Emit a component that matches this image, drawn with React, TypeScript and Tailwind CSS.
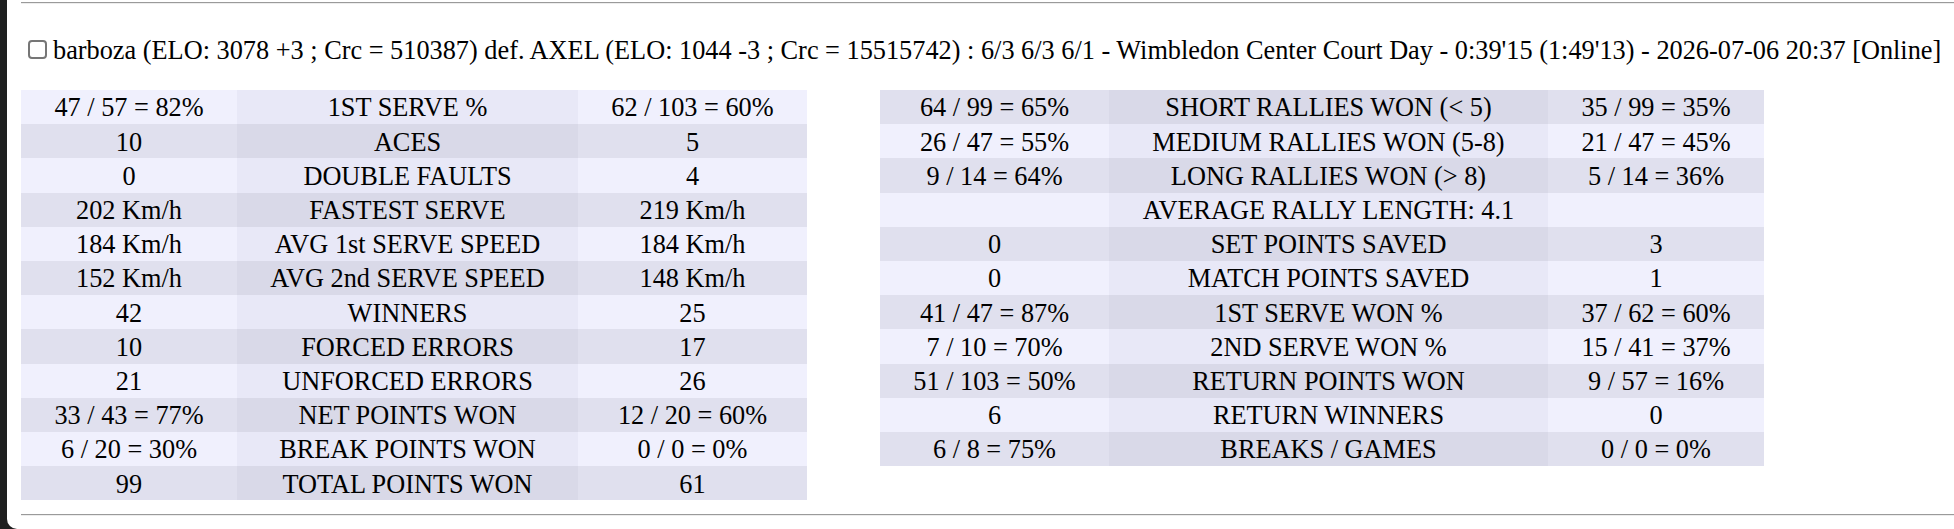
import React from 'react';

type Row = [string, string, string];

const leftRows: Row[] = [
  ['47 / 57 = 82%', '1ST SERVE %', '62 / 103 = 60%'],
  ['10', 'ACES', '5'],
  ['0', 'DOUBLE FAULTS', '4'],
  ['202 Km/h', 'FASTEST SERVE', '219 Km/h'],
  ['184 Km/h', 'AVG 1st SERVE SPEED', '184 Km/h'],
  ['152 Km/h', 'AVG 2nd SERVE SPEED', '148 Km/h'],
  ['42', 'WINNERS', '25'],
  ['10', 'FORCED ERRORS', '17'],
  ['21', 'UNFORCED ERRORS', '26'],
  ['33 / 43 = 77%', 'NET POINTS WON', '12 / 20 = 60%'],
  ['6 / 20 = 30%', 'BREAK POINTS WON', '0 / 0 = 0%'],
  ['99', 'TOTAL POINTS WON', '61'],
];

const rightRows: Row[] = [
  ['64 / 99 = 65%', 'SHORT RALLIES WON (< 5)', '35 / 99 = 35%'],
  ['26 / 47 = 55%', 'MEDIUM RALLIES WON (5-8)', '21 / 47 = 45%'],
  ['9 / 14 = 64%', 'LONG RALLIES WON (> 8)', '5 / 14 = 36%'],
  ['', 'AVERAGE RALLY LENGTH: 4.1', ''],
  ['0', 'SET POINTS SAVED', '3'],
  ['0', 'MATCH POINTS SAVED', '1'],
  ['41 / 47 = 87%', '1ST SERVE WON %', '37 / 62 = 60%'],
  ['7 / 10 = 70%', '2ND SERVE WON %', '15 / 41 = 37%'],
  ['51 / 103 = 50%', 'RETURN POINTS WON', '9 / 57 = 16%'],
  ['6', 'RETURN WINNERS', '0'],
  ['6 / 8 = 75%', 'BREAKS / GAMES', '0 / 0 = 0%'],
];

interface StatsTableProps {
  rows: Row[];
  widths: [string, string, string];
  darkFirst?: boolean;
}

function StatsTable({ rows, widths, darkFirst = false }: StatsTableProps) {
  return (
    <table className="border-collapse table-fixed">
      <colgroup>
        <col className={widths[0]} />
        <col className={widths[1]} />
        <col className={widths[2]} />
      </colgroup>
      <tbody>
        {rows.map((r, i) => {
          const dark = darkFirst ? i % 2 === 0 : i % 2 === 1;
          const side = dark ? 'bg-[#e0e0ee]' : 'bg-[#f0f0fd]';
          const mid = dark ? 'bg-[#d9d9e8]' : 'bg-[#e8e8f7]';
          return (
            <tr key={i} className="h-[34.2px]">
              <td className={`${side} p-0 pt-[3px] text-center leading-none`}>{r[0]}</td>
              <td className={`${mid} p-0 pt-[3px] text-center leading-none`}>{r[1]}</td>
              <td className={`${side} p-0 pt-[3px] text-center leading-none`}>{r[2]}</td>
            </tr>
          );
        })}
      </tbody>
    </table>
  );
}

export default function App() {
  return (
    <div className="flex h-[529px] w-[1954px] bg-[#1e1f1f] font-[family-name:Liberation_Serif,serif] text-[26.3px] text-black">
      <div className="w-[7px] shrink-0" />
      <div className="flex-1 bg-white rounded-bl-[10px] pl-[14px] pt-[2px]">
        <div className="h-px bg-[#9a9a9a]" />
        <div className="h-px bg-[#ededed]" />

        <div className="mt-[32px] flex items-center h-[26px] whitespace-nowrap">
          <span className="ml-[7px] mr-[6px] inline-block w-[19px] h-[19px] rounded-[4px] border-2 border-[#767676] bg-white" />
          <span className="pt-[3px]">
            barboza (ELO: 3078 +3 ; Crc = 510387) def. AXEL (ELO: 1044 -3 ; Crc = 15515742) : 6/3 6/3 6/1 - Wimbledon Center Court Day - 0:39'15 (1:49'13) - 2026-07-06 20:37 [Online]
          </span>
        </div>

        <div className="mt-[28px] flex items-start gap-[73px]">
          <StatsTable rows={leftRows} widths={['w-[216px]', 'w-[341px]', 'w-[229px]']} />
          <StatsTable rows={rightRows} widths={['w-[229px]', 'w-[439px]', 'w-[216px]']} darkFirst />
        </div>

        <div className="mt-[14px] h-px bg-[#9a9a9a]" />
        <div className="h-px bg-[#ededed]" />
      </div>
    </div>
  );
}
